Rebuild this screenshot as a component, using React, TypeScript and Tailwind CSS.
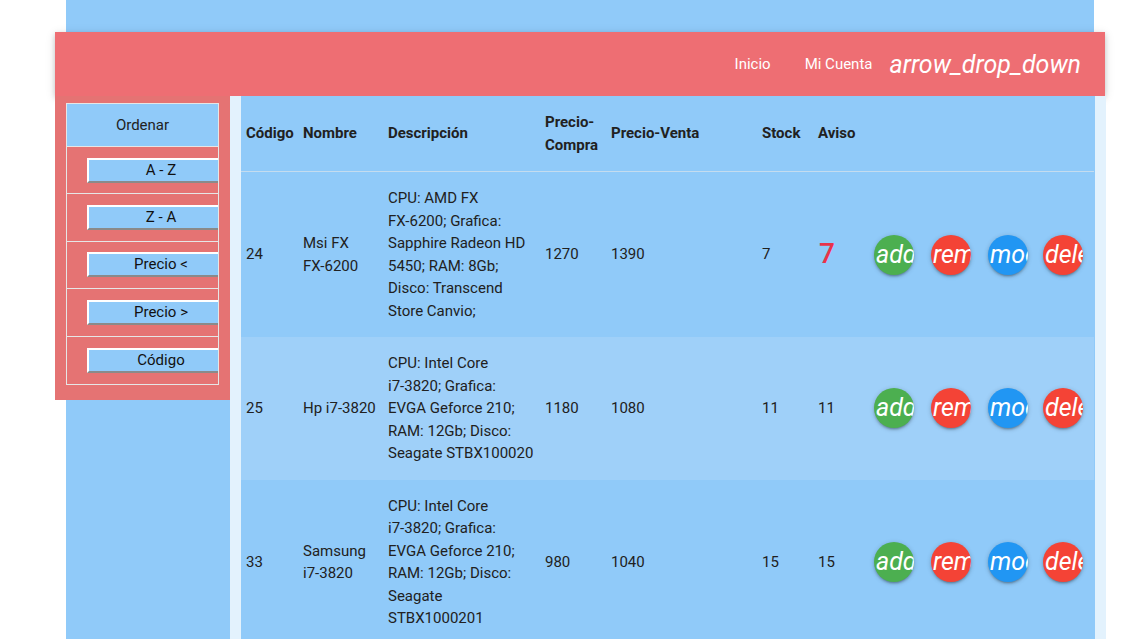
import React from 'react';

interface Producto {
  codigo: number;
  nombre: string;
  descripcion: string;
  compra: number;
  venta: number;
  stock: number;
  aviso: number;
  alerta?: boolean;
}

const productos: Producto[] = [
  {
    codigo: 24,
    nombre: 'Msi FX FX-6200',
    descripcion:
      'CPU: AMD FX FX-6200; Grafica: Sapphire Radeon HD 5450; RAM: 8Gb; Disco: Transcend Store Canvio;',
    compra: 1270,
    venta: 1390,
    stock: 7,
    aviso: 7,
    alerta: true,
  },
  {
    codigo: 25,
    nombre: 'Hp i7-3820',
    descripcion:
      'CPU: Intel Core i7-3820; Grafica: EVGA Geforce 210; RAM: 12Gb; Disco: Seagate STBX100020',
    compra: 1180,
    venta: 1080,
    stock: 11,
    aviso: 11,
  },
  {
    codigo: 33,
    nombre: 'Samsung i7-3820',
    descripcion:
      'CPU: Intel Core i7-3820; Grafica: EVGA Geforce 210; RAM: 12Gb; Disco: Seagate STBX1000201',
    compra: 980,
    venta: 1040,
    stock: 15,
    aviso: 15,
  },
];

const orden = ['A - Z', 'Z - A', 'Precio <', 'Precio >', 'Código'];

const acciones = [
  { icon: 'add', color: 'bg-[#4caf50]' },
  { icon: 'remove', color: 'bg-[#f44336]' },
  { icon: 'mode_edit', color: 'bg-[#2196f3]' },
  { icon: 'delete', color: 'bg-[#f44336]' },
];

// the original page never breaks words at their hyphen
function SinCorte({ texto }: { texto: string }) {
  const palabras = texto.split(' ');
  return (
    <>
      {palabras.map((w, i) => (
        <React.Fragment key={i}>
          {w.includes('-') ? <span className="whitespace-nowrap">{w}</span> : w}
          {i < palabras.length - 1 ? ' ' : ''}
        </React.Fragment>
      ))}
    </>
  );
}

function Navbar() {
  return (
    <nav className="-mx-[11px] flex h-16 items-center justify-end bg-[#ee6e73] pr-[24px] text-white shadow-[0_2px_5px_0_rgba(0,0,0,0.16),0_2px_10px_0_rgba(0,0,0,0.12)]">
      <a className="mr-[34px] text-[15px]">Inicio</a>
      <a className="mr-[17px] text-[15px]">Mi Cuenta</a>
      <i className="text-[25px] leading-none">arrow_drop_down</i>
    </nav>
  );
}

function Sidebar() {
  return (
    <aside className="-ml-[11px] w-[175px] shrink-0 self-start bg-[#e57373] px-[11px] pt-[7px] pb-[15px]">
      <ul className="border border-[#e6e6e6]">
        <li className="flex h-[43px] items-center justify-center border-b border-[#e6e6e6] bg-[#90caf9] text-[15px] text-[#222]">
          Ordenar
        </li>
        {orden.map((o, i) => (
          <li
            key={o}
            className={`flex h-[47.4px] items-center overflow-hidden pl-[20px] ${
              i < orden.length - 1 ? 'border-b border-[#e6e6e6]' : ''
            }`}
          >
            <button
              type="button"
              className="h-[25px] w-[148px] shrink-0 border-2 border-t-white border-l-white border-r-[#8a8a8a] border-b-[#8a8a8a] bg-[#90caf9] text-[15px] leading-none text-[#111]"
            >
              {o}
            </button>
          </li>
        ))}
      </ul>
    </aside>
  );
}

function Tabla() {
  const cols = [57, 85, 157, 66, 151, 56, 56, 57, 57, 55];
  return (
    <table className="w-[853px] table-fixed border-collapse text-[15px] leading-[22.5px] text-[#212121]">
      <colgroup>
        {cols.map((w, i) => (
          <col key={i} style={{ width: w }} />
        ))}
      </colgroup>
      <thead>
        <tr className="border-b border-[#c4dcef] text-left font-bold">
          <th className="px-[5px] py-[15px]">Código</th>
          <th className="px-[5px] py-[15px]">Nombre</th>
          <th className="px-[5px] py-[15px]">Descripción</th>
          <th className="px-[5px] py-[15px]">Precio-Compra</th>
          <th className="px-[5px] py-[15px]">Precio-Venta</th>
          <th className="px-[5px] py-[15px]">Stock</th>
          <th className="px-[5px] py-[15px]">Aviso</th>
          <th colSpan={4} />
        </tr>
      </thead>
      <tbody>
        {productos.map((p, i) => (
          <tr key={p.codigo} className={i % 2 === 1 ? 'bg-[#9fd0f9]' : ''}>
            <td className="px-[5px] py-[15px]">{p.codigo}</td>
            <td className="px-[5px] py-[15px]">
              <SinCorte texto={p.nombre} />
            </td>
            <td className="px-[5px] py-[15px]">
              <SinCorte texto={p.descripcion} />
            </td>
            <td className="px-[5px] py-[15px]">{p.compra}</td>
            <td className="px-[5px] py-[15px]">{p.venta}</td>
            <td className="px-[5px] py-[15px]">{p.stock}</td>
            <td className="px-[5px] py-[15px]">
              {p.alerta ? (
                <span className="pl-[1px] text-[28px] font-medium leading-none text-[#e8334a]">
                  {p.aviso}
                </span>
              ) : (
                p.aviso
              )}
            </td>
            {acciones.map((a) => (
              <td key={a.icon} className="px-[5px] py-[15px]">
                <a
                  className={`block h-10 w-10 overflow-hidden rounded-full ${a.color} shadow-[0_2px_2px_0_rgba(0,0,0,0.14),0_3px_1px_-2px_rgba(0,0,0,0.12),0_1px_5px_0_rgba(0,0,0,0.2)]`}
                >
                  <i className="block whitespace-nowrap pl-[2px] text-[25px] leading-10 text-white">
                    {a.icon}
                  </i>
                </a>
              </td>
            ))}
          </tr>
        ))}
      </tbody>
    </table>
  );
}

export default function App() {
  return (
    <div className="min-h-screen bg-white font-['Roboto',sans-serif]">
      <div className="ml-[66px] min-h-[639px] w-[1028px] bg-[#90caf9] pt-8">
        <Navbar />
        <div className="flex">
          <Sidebar />
          <main className="w-[876px] shrink-0 bg-[#e3f2fd] px-[11px]">
            <div className="bg-[#90caf9]">
              <Tabla />
            </div>
          </main>
        </div>
      </div>
    </div>
  );
}
